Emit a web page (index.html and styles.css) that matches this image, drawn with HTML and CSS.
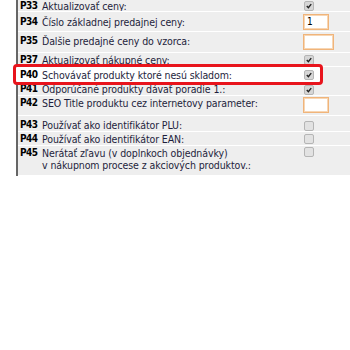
FILE: index.html
```html
<!DOCTYPE html>
<html>
<head>
<meta charset="utf-8">
<link rel="stylesheet" href="styles.css">
</head>
<body>
<div class="panel">
  <div class="row r33"><span class="code">P33</span><span class="label">Aktualizovať ceny:</span><span class="ctl"><span class="cb on"><svg viewBox="0 0 9 9"><path d="M2 4.6 L3.8 6.4 L7 2.4" /></svg></span></span></div>
  <div class="row r34"><span class="code">P34</span><span class="label">Číslo základnej predajnej ceny:</span><span class="ctl"><span class="inp w27">1</span></span></div>
  <div class="row r35"><span class="code">P35</span><span class="label">Ďalšie predajné ceny do vzorca:</span><span class="ctl"><span class="inp w32"></span></span></div>
  <div class="row r37"><span class="code">P37</span><span class="label">Aktualizovať nákupné ceny:</span><span class="ctl"><span class="cb on"><svg viewBox="0 0 9 9"><path d="M2 4.6 L3.8 6.4 L7 2.4" /></svg></span></span></div>
  <div class="row r40"><span class="code">P40</span><span class="label">Schovávať produkty ktoré nesú skladom:</span><span class="ctl"><span class="cb on"><svg viewBox="0 0 9 9"><path d="M2 4.6 L3.8 6.4 L7 2.4" /></svg></span></span></div>
  <div class="row r41"><span class="code">P41</span><span class="label">Odporúčané produkty dávať poradie 1.:</span><span class="ctl"><span class="cb on"><svg viewBox="0 0 9 9"><path d="M2 4.6 L3.8 6.4 L7 2.4" /></svg></span></span></div>
  <div class="row r42"><span class="code">P42</span><span class="label">SEO Title produktu cez internetovy parameter:</span><span class="ctl"><span class="inp w27"></span></span></div>
  <div class="row r43"><span class="code">P43</span><span class="label">Používať ako identifikátor PLU:</span><span class="ctl"><span class="cb"></span></span></div>
  <div class="row r44"><span class="code">P44</span><span class="label">Používať ako identifikátor EAN:</span><span class="ctl"><span class="cb"></span></span></div>
  <div class="row r45"><span class="code">P45</span><span class="label">Nerátať zľavu (v doplnkoch objednávky)<br>v nákupnom procese z akciových produktov.:</span><span class="ctl"><span class="cb"></span></span></div>
</div>
</body>
</html>
```

FILE: styles.css
```css
html, body {
  margin: 0;
  padding: 0;
  background: #ffffff;
}
body {
  font-family: "DejaVu Sans Condensed", "DejaVu Sans", sans-serif;
  font-stretch: condensed;
  font-size: 10.5px;
  color: #1e1e3c;
}
.panel {
  margin-left: 16px;
  width: 334px;
  border-left: 2px solid #666666;
  background: #eeeeee;
  display: flex;
  flex-direction: column;
}
.row {
  display: grid;
  grid-template-columns: 22px 261px 1fr;
  align-items: center;
  padding-left: 2px;
  border-bottom: 1px solid #ffffff;
  line-height: 12px;
  overflow: hidden;
}
.code {
  font-size: 10px;
  font-weight: bold;
  color: #000000;
  letter-spacing: -0.5px;
}
.label {
  white-space: nowrap;
  letter-spacing: -0.1px;
}
.ctl {
  display: flex;
  align-items: center;
}
.r33 { height: 11px; }
.r34 { height: 19px; }
.r35 { height: 20px; }
.r35 .label, .r35 .code { margin-bottom: 2px; }
.r37 { height: 13px; }
.r40 {
  position: relative;
  z-index: 2;
  height: 15px;
  margin: -3px 0 -4px -5px;
  background: #ffffff;
  border: 3px solid #e8141c;
  border-radius: 4px;
  width: 300px;
  padding-left: 4px;
}
.r41 { height: 14px; align-items: end; }
.r42 { align-items: start; padding-top: 1px; height: 18px; }
.r43 { height: 15px; align-items: end; }
.r44 { height: 13px; }
.r45 { height: 28px; align-items: start; padding-top: 1px; }
.cb {
  display: inline-block;
  width: 8px;
  height: 8px;
  margin-left: 1px;
  border: 1px solid #b5b5b5;
  border-radius: 2px;
  background: #e2e2e2;
}
.cb svg {
  display: block;
  width: 8px;
  height: 8px;
}
.cb path {
  fill: none;
  stroke: #222222;
  stroke-width: 1.6;
}
.cb.on {
  background: #d6d6d6;
}
.inp {
  display: inline-block;
  height: 14px;
  border: 1px solid #f0b47a;
  box-shadow: inset 0 0 0 1px #f7d6b4;
  background: #ffffff;
  font-size: 10px;
  line-height: 14px;
  padding-left: 3px;
  box-sizing: content-box;
  color: #000;
}
.w27 { width: 21px; }
.w32 { width: 26px; }
```
